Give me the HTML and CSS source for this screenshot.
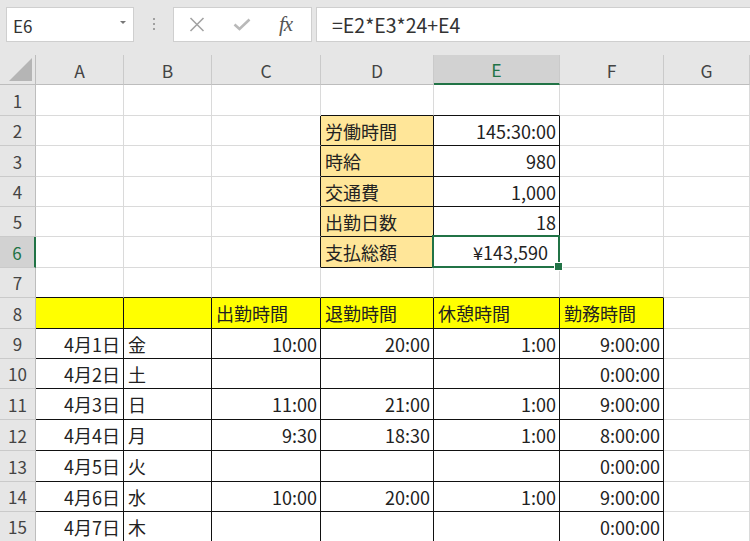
FILE: index.html
```html
<!DOCTYPE html>
<html lang="ja">
<head>
<meta charset="utf-8">
<link rel="stylesheet" href="styles.css">
</head>
<body>
<div class="app">
  <div class="toolbar">
    <div class="namebox"><span class="nb-text">E6</span><span class="nb-arrow"></span></div>
    <div class="dots"><i></i><i></i><i></i></div>
    <div class="fxbox">
      <svg class="ico-x" width="16" height="15" viewBox="0 0 16 15"><path d="M1.5 1 L14.5 14 M14.5 1 L1.5 14" stroke="#a3a3a3" stroke-width="1.6" fill="none"/></svg>
      <svg class="ico-ok" width="18" height="13" viewBox="0 0 18 13"><path d="M1.5 6.5 L6.5 11 L16.5 1.5" stroke="#b9b9b9" stroke-width="2.6" fill="none"/></svg>
      <span class="fx">fx</span>
    </div>
    <div class="formula">=E2*E3*24+E4</div>
  </div>
  <div class="sheet">
    <div class="corner"><span class="tri"></span></div>
    <div class="ch">A</div><div class="ch">B</div><div class="ch">C</div><div class="ch">D</div><div class="ch on">E</div><div class="ch">F</div><div class="ch">G</div>

    <div class="rh">1</div>
    <div class="c"></div><div class="c"></div><div class="c"></div><div class="c bb"></div><div class="c bb"></div><div class="c"></div><div class="c"></div>

    <div class="rh">2</div>
    <div class="c"></div><div class="c"></div><div class="c br"></div><div class="c bb br or">労働時間</div><div class="c bb br r">145:30:00</div><div class="c"></div><div class="c"></div>

    <div class="rh">3</div>
    <div class="c"></div><div class="c"></div><div class="c br"></div><div class="c bb br or">時給</div><div class="c bb br r">980</div><div class="c"></div><div class="c"></div>

    <div class="rh">4</div>
    <div class="c"></div><div class="c"></div><div class="c br"></div><div class="c bb br or">交通費</div><div class="c bb br r">1,000</div><div class="c"></div><div class="c"></div>

    <div class="rh">5</div>
    <div class="c"></div><div class="c"></div><div class="c br"></div><div class="c bb br or">出勤日数</div><div class="c bb br r">18</div><div class="c"></div><div class="c"></div>

    <div class="rh on">6</div>
    <div class="c"></div><div class="c"></div><div class="c br"></div><div class="c bb br or">支払総額</div><div class="c bb br r sel yen">¥143,590</div><div class="c"></div><div class="c"></div>

    <div class="rh">7</div>
    <div class="c bb"></div><div class="c bb"></div><div class="c bb"></div><div class="c bb"></div><div class="c bb"></div><div class="c bb"></div><div class="c"></div>

    <div class="rh">8</div>
    <div class="c bb br ye"></div><div class="c bb br ye"></div><div class="c bb br ye">出勤時間</div><div class="c bb br ye">退勤時間</div><div class="c bb br ye">休憩時間</div><div class="c bb br ye">勤務時間</div><div class="c"></div>

    <div class="rh">9</div>
    <div class="c bb br r">4月1日</div><div class="c bb br">金</div><div class="c bb br r">10:00</div><div class="c bb br r">20:00</div><div class="c bb br r">1:00</div><div class="c bb br r">9:00:00</div><div class="c"></div>

    <div class="rh">10</div>
    <div class="c bb br r">4月2日</div><div class="c bb br">土</div><div class="c bb br r"></div><div class="c bb br r"></div><div class="c bb br r"></div><div class="c bb br r">0:00:00</div><div class="c"></div>

    <div class="rh">11</div>
    <div class="c bb br r">4月3日</div><div class="c bb br">日</div><div class="c bb br r">11:00</div><div class="c bb br r">21:00</div><div class="c bb br r">1:00</div><div class="c bb br r">9:00:00</div><div class="c"></div>

    <div class="rh">12</div>
    <div class="c bb br r">4月4日</div><div class="c bb br">月</div><div class="c bb br r">9:30</div><div class="c bb br r">18:30</div><div class="c bb br r">1:00</div><div class="c bb br r">8:00:00</div><div class="c"></div>

    <div class="rh">13</div>
    <div class="c bb br r">4月5日</div><div class="c bb br">火</div><div class="c bb br r"></div><div class="c bb br r"></div><div class="c bb br r"></div><div class="c bb br r">0:00:00</div><div class="c"></div>

    <div class="rh">14</div>
    <div class="c bb br r">4月6日</div><div class="c bb br">水</div><div class="c bb br r">10:00</div><div class="c bb br r">20:00</div><div class="c bb br r">1:00</div><div class="c bb br r">9:00:00</div><div class="c"></div>

    <div class="rh">15</div>
    <div class="c bb br r">4月7日</div><div class="c bb br">木</div><div class="c bb br r"></div><div class="c bb br r"></div><div class="c bb br r"></div><div class="c bb br r">0:00:00</div><div class="c"></div>
  </div>
</div>
</body>
</html>
```

FILE: styles.css
```css
* { box-sizing: border-box; }
html, body { margin: 0; padding: 0; }
body {
  width: 750px;
  height: 541px;
  overflow: hidden;
  background: #e6e6e6;
  font-family: "Noto Sans CJK JP", "Noto Sans", sans-serif;
  color: #222;
}
.app { width: 750px; }

.toolbar {
  height: 55px;
  display: flex;
  align-items: flex-start;
  padding: 7px 0 0 6px;
}
.namebox {
  width: 128px;
  height: 35px;
  background: #fff;
  border: 1px solid #cfcfcf;
  display: flex;
  align-items: center;
  justify-content: space-between;
  padding: 0 7px 0 6px;
}
.nb-text { font-size: 17px; color: #333; padding-top: 2px; }
.nb-arrow {
  width: 0; height: 0;
  border-left: 3.5px solid transparent;
  border-right: 3.5px solid transparent;
  border-top: 3.5px solid #777;
  margin-top: -4px;
}
.dots {
  width: 39px;
  height: 35px;
  display: flex;
  flex-direction: column;
  align-items: center;
  justify-content: center;
  gap: 3px;
  padding-bottom: 2px;
}
.dots i { display: block; width: 2px; height: 2px; background: #a0a0a0; }
.fxbox {
  width: 139px;
  height: 35px;
  background: #fff;
  border: 1px solid #cfcfcf;
  display: flex;
  align-items: center;
  padding: 0 0 0 15px;
}
.ico-x { margin-top: -1px; }
.ico-ok { margin-left: 28px; }
.fx {
  margin-left: 28px;
  font-family: "Liberation Serif", serif;
  font-style: italic;
  font-size: 21px;
  color: #555;
  letter-spacing: -1px;
}
.formula {
  flex: 1;
  height: 35px;
  margin-left: 4px;
  background: #fff;
  border: 1px solid #cfcfcf;
  border-right: none;
  display: flex;
  align-items: center;
  padding-left: 15px;
  font-size: 19.5px;
  color: #333;
}

.sheet {
  display: grid;
  grid-template-columns: 36px 88px 88px 109px 113px 126px 104px 86px;
  grid-template-rows: 30px 31px 30px 31px 30px 30px 31px 30px 31px 30px 30px 31px 31px 31px 30px 30px;
  background: #fff;
}
.corner {
  background: #e6e6e6;
  border-right: 1px solid #bdbdbd;
  border-bottom: 1px solid #bdbdbd;
  position: relative;
}
.tri {
  position: absolute;
  right: 3px;
  bottom: 3px;
  width: 0; height: 0;
  border-left: 23px solid transparent;
  border-bottom: 23px solid #b5b5b5;
}
.ch {
  background: #e6e6e6;
  border-right: 1px solid #cacaca;
  border-bottom: 1px solid #bdbdbd;
  display: flex;
  align-items: center;
  justify-content: center;
  font-size: 17.5px;
  color: #444;
  padding-top: 1px;
}
.ch.on {
  background: #d2d2d2;
  color: #217346;
  border-bottom: 2px solid #217346;
}
.rh {
  background: #e6e6e6;
  border-right: 1px solid #bdbdbd;
  border-bottom: 1px solid #cacaca;
  display: flex;
  align-items: center;
  justify-content: center;
  font-size: 17px;
  color: #444;
}
.rh.on {
  background: #d2d2d2;
  color: #217346;
  border-right: 2px solid #217346;
}
.c {
  background: #fff;
  border-right: 1px solid #dadada;
  border-bottom: 1px solid #dadada;
  display: flex;
  align-items: center;
  padding: 0 3px 0 4px;
  font-size: 18px;
  white-space: nowrap;
  overflow: hidden;
  color: #222;
}
.c.r { justify-content: flex-end; }
.c.bb { border-bottom-color: #111; }
.c.br { border-right-color: #111; }
.c.or { background: #ffe699; }
.c.ye { background: #ffff00; }
.c.yen { padding-right: 11px; }
.c.sel { position: relative; overflow: visible; z-index: 2; }
.c.sel::after {
  content: "";
  position: absolute;
  top: -2px; left: -2px; right: -1px; bottom: -1px;
  border: 2px solid #217346;
}
.c.sel::before {
  content: "";
  position: absolute;
  right: -4px; bottom: -4px;
  width: 7px; height: 7px;
  background: #217346;
  border: 1px solid #fff;
  z-index: 3;
}
```
